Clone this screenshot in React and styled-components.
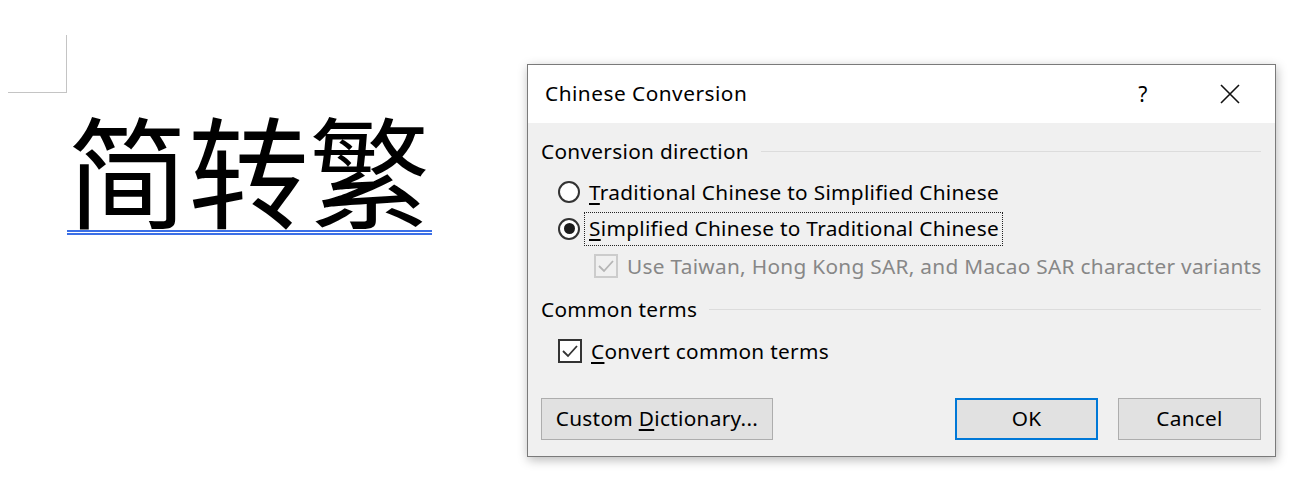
import styled, { createGlobalStyle } from "styled-components";

const GlobalStyle = createGlobalStyle`
  html, body {
    margin: 0;
    padding: 0;
    background: #ffffff;
  }
  body {
    font-family: "Noto Sans", "Open Sans", sans-serif;
  }
`;

const Page = styled.div`
  display: flex;
  align-items: flex-start;
  width: 1306px;
  height: 500px;
  overflow: hidden;
`;

const DocArea = styled.div`
  width: 527px;
  flex-shrink: 0;
  padding-top: 35px;
  padding-left: 8px;
  box-sizing: border-box;
`;

const CornerMark = styled.div`
  width: 58px;
  height: 57px;
  border-right: 1px solid #c4c4c4;
  border-bottom: 1px solid #c4c4c4;
`;

const Heading = styled.div`
  margin-left: 59px;
  margin-top: 10px;
  font-family: "Noto Sans CJK SC", sans-serif;
  font-size: 121px;
  line-height: 128px;
  color: #000;

  span {
    display: inline-block;
    border-bottom: 5px double #3b6fe6;
    line-height: 126px;
    padding-right: 2px;
  }
`;

const Dialog = styled.div`
  margin-top: 64px;
  width: 749px;
  box-sizing: border-box;
  border: 1px solid #7a7a7a;
  background: #f0f0f0;
  box-shadow: 1px 3px 10px rgba(0, 0, 0, 0.28);
  font-size: 20.8px;
  letter-spacing: 0.3px;
  color: #000;
`;

const TitleBar = styled.div`
  height: 58px;
  background: #fff;
  display: flex;
  align-items: center;
  padding-left: 17px;
  padding-right: 34px;
`;

const TitleText = styled.div`
  flex: 1;
  padding-bottom: 2px;
  letter-spacing: 0.5px;
`;

const Help = styled.div`
  width: 20px;
  text-align: center;
  margin-right: 66px;
  font-size: 21px;
`;

const Body = styled.div`
  padding: 14px 14px 16px 13px;
`;

const GroupHeader = styled.div`
  display: flex;
  align-items: center;
  height: 28px;
  margin-top: ${({ $mt }) => $mt || 0}px;

  &::after {
    content: "";
    flex: 1;
    height: 1px;
    background: #dcdcdc;
    margin-left: 12px;
  }
`;

const OptionRow = styled.div`
  display: flex;
  align-items: center;
  height: 37px;
  padding-left: ${({ $indent }) => $indent}px;
  color: ${({ $disabled }) => ($disabled ? "#878787" : "#000")};
  margin-top: ${({ $mt }) => $mt || 0}px;
`;

const Radio = styled.span`
  width: 22px;
  height: 22px;
  box-sizing: border-box;
  border-radius: 50%;
  border: 2px solid #333;
  background: #fff;
  display: flex;
  align-items: center;
  justify-content: center;
  flex-shrink: 0;

  &::after {
    content: "";
    display: ${({ $checked }) => ($checked ? "block" : "none")};
    width: 11px;
    height: 11px;
    border-radius: 50%;
    background: #1c1c1c;
  }
`;

const Box = styled.span`
  width: 24px;
  height: 24px;
  box-sizing: border-box;
  border: 2px solid ${({ $disabled }) => ($disabled ? "#cccccc" : "#333")};
  background: ${({ $disabled }) => ($disabled ? "#f0f0f0" : "#fff")};
  display: flex;
  align-items: center;
  justify-content: center;
  flex-shrink: 0;
`;

const Label = styled.span`
  margin-left: ${({ $focus }) => ($focus ? 4 : 9)}px;
  padding: ${({ $focus }) => ($focus ? "1px 3px 3px 4px" : "0")};
  border: ${({ $focus }) => ($focus ? "1px dotted #222" : "none")};
  white-space: nowrap;

  u {
    text-underline-offset: 3px;
    text-decoration-thickness: 1.5px;
  }
`;

const ButtonRow = styled.div`
  display: flex;
  align-items: center;
  margin-top: 29px;
`;

const Button = styled.button`
  height: 42px;
  width: ${({ $w }) => $w}px;
  box-sizing: border-box;
  background: #e1e1e1;
  border: ${({ $primary }) => ($primary ? "2px solid #0078d7" : "1px solid #adadad")};
  font-family: inherit;
  font-size: 20.8px;
  letter-spacing: 0.3px;
  color: #000;
  padding: 0 0 2px 0;
  margin-left: ${({ $ml }) => $ml || 0}px;

  u {
    text-underline-offset: 3px;
    text-decoration-thickness: 1.5px;
  }
`;

const Spacer = styled.div`
  flex: 1;
`;

const Check = ({ color }) => (
  <svg width="18" height="14" viewBox="0 0 18 14">
    <polyline points="2,7 7,12 16,2" fill="none" stroke={color} strokeWidth="1.8" />
  </svg>
);

const Close = () => (
  <svg width="22" height="22" viewBox="0 0 22 22">
    <path d="M2 2 L20 20 M20 2 L2 20" stroke="#111" strokeWidth="1.6" fill="none" />
  </svg>
);

export default function App() {
  return (
    <>
      <GlobalStyle />
      <Page>
        <DocArea>
          <CornerMark />
          <Heading>
            <span>简转繁</span>
          </Heading>
        </DocArea>

        <Dialog>
          <TitleBar>
            <TitleText>Chinese Conversion</TitleText>
            <Help>?</Help>
            <Close />
          </TitleBar>

          <Body>
            <GroupHeader>Conversion direction</GroupHeader>
            <OptionRow $indent={17} $mt={8}>
              <Radio />
              <Label>
                <u>T</u>raditional Chinese to Simplified Chinese
              </Label>
            </OptionRow>
            <OptionRow $indent={17}>
              <Radio $checked />
              <Label $focus>
                <u>S</u>implified Chinese to Traditional Chinese
              </Label>
            </OptionRow>
            <OptionRow $indent={53} $disabled>
              <Box $disabled>
                <Check color="#b5b5b5" />
              </Box>
              <Label>Use Taiwan, Hong Kong SAR, and Macao SAR character variants</Label>
            </OptionRow>

            <GroupHeader $mt={11}>Common terms</GroupHeader>
            <OptionRow $indent={17} $mt={9}>
              <Box>
                <Check color="#333" />
              </Box>
              <Label>
                <u>C</u>onvert common terms
              </Label>
            </OptionRow>

            <ButtonRow>
              <Button $w={232}>
                Custom <u>D</u>ictionary...
              </Button>
              <Spacer />
              <Button $w={143} $primary>
                OK
              </Button>
              <Button $w={143} $ml={20}>
                Cancel
              </Button>
            </ButtonRow>
          </Body>
        </Dialog>
      </Page>
    </>
  );
}
